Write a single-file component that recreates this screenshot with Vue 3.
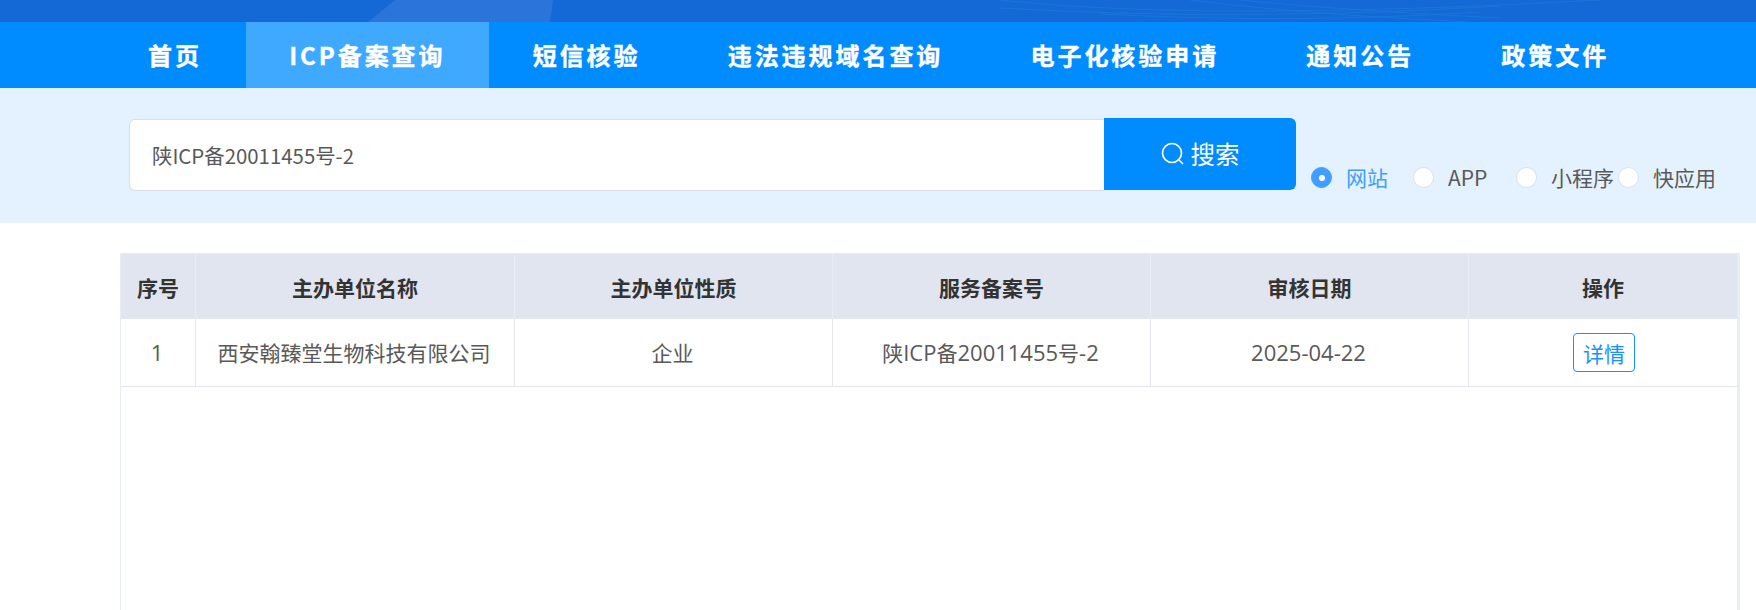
<template>
  <div class="page">
    <div class="banner">
      <svg class="banner-art" viewBox="0 0 1756 22" width="1756" height="22" aria-hidden="true">
        <polygon points="368,22 395,0 553,0 550,22" fill="#2a74da" />
        <g fill="none" stroke="#1f7ddc" stroke-width="1" opacity=".6">
          <path d="M1000 0 Q1200 22 1600 0" />
          <path d="M1190 0 Q1300 14 1470 22" />
          <path d="M1240 0 Q1340 10 1500 18" />
          <path d="M1000 8 Q1240 22 1500 6" />
          <path d="M1100 14 Q1300 24 1480 12" />
        </g>
      </svg>
    </div>

    <nav class="nav">
      <a v-for="item in navItems" :key="item" class="nav-item" :class="{ active: item === 'ICP备案查询' }">{{ item }}</a>
    </nav>

    <section class="search-band">
      <div class="search-input">陕ICP备20011455号-2</div>
      <div class="search-btn">
        <svg width="23" height="23" viewBox="0 0 23 23" fill="none" stroke="#fff" stroke-width="1.7" aria-hidden="true">
          <circle cx="11" cy="11" r="9.5" />
          <path d="M18 18l3.5 3.5" stroke-linecap="round" />
        </svg>
        <span>搜索</span>
      </div>
      <div class="radios">
        <label v-for="r in radios" :key="r.name" class="radio" :class="{ checked: r.checked }" :style="{ width: r.width + 'px' }">
          <span class="dot"></span>
          <span class="radio-text">{{ r.name }}</span>
        </label>
      </div>
    </section>

    <section class="table-wrap">
      <div class="table">
        <div class="row head">
          <div v-for="h in headers" :key="h" class="cell">{{ h }}</div>
        </div>
        <div class="row body">
          <div class="cell"><span class="num">1</span></div>
          <div class="cell">西安翰臻堂生物科技有限公司</div>
          <div class="cell">企业</div>
          <div class="cell"><span>陕<span class="num">ICP</span>备<span class="num">20011455</span>号<span class="num">-2</span></span></div>
          <div class="cell"><span class="num">2025-04-22</span></div>
          <div class="cell"><span class="detail">详情</span></div>
        </div>
      </div>
    </section>
  </div>
</template>

<script setup>
const navItems = ['首页', 'ICP备案查询', '短信核验', '违法违规域名查询', '电子化核验申请', '通知公告', '政策文件']
const radios = [
  { name: '网站', checked: true, width: 102 },
  { name: 'APP', width: 103 },
  { name: '小程序', width: 102 },
  { name: '快应用', width: 102 }
]
const headers = ['序号', '主办单位名称', '主办单位性质', '服务备案号', '审核日期', '操作']
</script>

<style>
html, body { margin: 0; background: #fff; overflow: hidden; }
</style>

<style scoped>
.page {
  width: 1756px;
  height: 610px;
  overflow: hidden;
  font-family: "Noto Sans CJK SC", "Noto Sans", sans-serif;
  color: #595959;
}
.banner { height: 22px; background: #1469d6; }
.banner-art { display: block; }
.nav {
  height: 66px;
  background: #008bff;
  display: flex;
  padding-left: 104.5px;
}
.nav-item {
  padding: 0 43.6px;
  line-height: 65px;
  height: 66px;
  font-size: 24px;
  font-weight: 700;
  letter-spacing: 2.95px;
  -webkit-text-stroke: 0.35px #fff;
  color: #fff;
  white-space: nowrap;
}
.nav-item.active { background: #3fa9ff; }
.search-band {
  height: 135px;
  box-sizing: border-box;
  background: #e4f2ff;
  padding: 30px 0 0 129px;
  display: flex;
  align-items: flex-start;
}
.search-input {
  width: 975px;
  height: 72px;
  margin-top: 1px;
  box-sizing: border-box;
  background: #fff;
  border: 1px solid #dcdfe6;
  border-right: 0;
  border-radius: 6px 0 0 6px;
  padding-left: 22px;
  line-height: 70px;
  font-size: 20.4px;
  color: #595959;
}
.search-btn {
  width: 192px;
  height: 72px;
  padding-bottom: 2px;
  box-sizing: border-box;
  background: #008bff;
  border-radius: 0 6px 6px 0;
  color: #fff;
  font-size: 24.5px;
  display: flex;
  align-items: center;
  justify-content: center;
  gap: 7px;
}
.radios {
  display: flex;
  margin: 49px 0 0 15px;
}
.radio {
  display: flex;
  align-items: center;
  gap: 14px;
  height: 21px;
  font-size: 21px;
  white-space: nowrap;
  color: #595959;
}
.radio-text { margin-top: -2px; }
.dot {
  width: 21px;
  height: 21px;
  box-sizing: border-box;
  border-radius: 50%;
  background: #fff;
  border: 1px solid #dcdfe6;
  flex: none;
  display: flex;
  align-items: center;
  justify-content: center;
}
.radio.checked { color: #409eff; }
.radio.checked .dot { background: #409eff; border-color: #409eff; }
.radio.checked .dot::after {
  content: "";
  width: 6px;
  height: 6px;
  border-radius: 50%;
  background: #fff;
}
.table-wrap {
  margin: 30px 0 0 120px;
  width: 1620px;
  height: 357px;
  box-sizing: border-box;
  border-top: 1px solid #e8ecf5;
  border-left: 1px solid #e8ecf5;
  border-right: 3px solid #e8ecf5;
}
.row {
  display: grid;
  grid-template-columns: 75px 319px 318px 318px 318px 1fr;
}
.cell {
  display: flex;
  align-items: center;
  justify-content: center;
  white-space: nowrap;
  box-sizing: border-box;
  border-right: 1px solid #e4e7ed;
  padding-right: 2px;
  font-size: 21px;
}
.cell:last-child { border-right: 0; padding-right: 0; }
.num { font-family: "Open Sans", sans-serif; font-size: 22px; }
.head { height: 65px; background: #e1e5f0; }
.head .cell {
  font-weight: 700;
  font-size: 21px;
  color: #333;
  padding-right: 0;
  border-right-color: #e9ecf4;
}
.body { height: 68px; border-bottom: 1px solid #e4e7ed; box-sizing: border-box; }
.body .cell { padding-bottom: 2px; }
.detail {
  width: 62px;
  height: 39px;
  margin: 2px 0 0 2px;
  box-sizing: border-box;
  border: 1px solid #1890ff;
  border-radius: 4px;
  color: #1890ff;
  display: flex;
  align-items: center;
  justify-content: center;
}
</style>
